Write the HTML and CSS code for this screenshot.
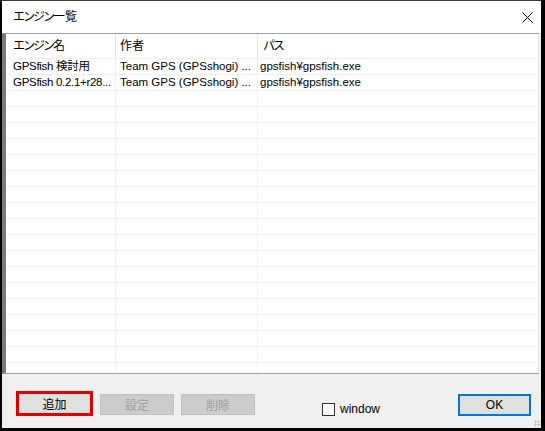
FILE: index.html
```html
<!DOCTYPE html>
<html lang="ja">
  <head>
    <meta charset="UTF-8" />
    <title>エンジン一覧</title>
    <link rel="stylesheet" href="styles.css">
  </head>
  <body>
    <div class="dialog">
      <div class="titlebar">
        <span class="title"><span class="kana">エンジン</span>一覧</span>
        <svg class="close" width="11" height="11" viewBox="0 0 11 11">
          <path d="M0.5 0.5 L10.5 10.5 M10.5 0.5 L0.5 10.5" stroke="#000" stroke-width="1" fill="none" />
        </svg>
      </div>
      <div class="list">
        <div class="row header">
          <div class="cell c1"><span class="kana">エンジン</span>名</div>
          <div class="cell c2">作者</div>
          <div class="cell c3 h3"><span class="kana">パス</span></div>
        </div>
        <div class="row">
          <div class="cell c1">GPSfish 検討用</div>
          <div class="cell c2">Team GPS (GPSshogi) ...</div>
          <div class="cell c3">gpsfish¥gpsfish.exe</div>
        </div>
        <div class="row">
          <div class="cell c1">GPSfish 0.2.1+r28...</div>
          <div class="cell c2">Team GPS (GPSshogi) ...</div>
          <div class="cell c3">gpsfish¥gpsfish.exe</div>
        </div>
        <!-- empty rows -->
        <div class="row"><div class="cell c1"></div><div class="cell c2"></div><div class="cell c3"></div></div>
        <div class="row"><div class="cell c1"></div><div class="cell c2"></div><div class="cell c3"></div></div>
        <div class="row"><div class="cell c1"></div><div class="cell c2"></div><div class="cell c3"></div></div>
        <div class="row"><div class="cell c1"></div><div class="cell c2"></div><div class="cell c3"></div></div>
        <div class="row"><div class="cell c1"></div><div class="cell c2"></div><div class="cell c3"></div></div>
        <div class="row"><div class="cell c1"></div><div class="cell c2"></div><div class="cell c3"></div></div>
        <div class="row"><div class="cell c1"></div><div class="cell c2"></div><div class="cell c3"></div></div>
        <div class="row"><div class="cell c1"></div><div class="cell c2"></div><div class="cell c3"></div></div>
        <div class="row"><div class="cell c1"></div><div class="cell c2"></div><div class="cell c3"></div></div>
        <div class="row"><div class="cell c1"></div><div class="cell c2"></div><div class="cell c3"></div></div>
        <div class="row"><div class="cell c1"></div><div class="cell c2"></div><div class="cell c3"></div></div>
        <div class="row"><div class="cell c1"></div><div class="cell c2"></div><div class="cell c3"></div></div>
        <div class="row"><div class="cell c1"></div><div class="cell c2"></div><div class="cell c3"></div></div>
        <div class="row"><div class="cell c1"></div><div class="cell c2"></div><div class="cell c3"></div></div>
        <div class="row"><div class="cell c1"></div><div class="cell c2"></div><div class="cell c3"></div></div>
        <div class="row"><div class="cell c1"></div><div class="cell c2"></div><div class="cell c3"></div></div>
        <div class="row"><div class="cell c1"></div><div class="cell c2"></div><div class="cell c3"></div></div>
        <div class="row"><div class="cell c1"></div><div class="cell c2"></div><div class="cell c3"></div></div>
      </div>
      <div class="footer">
        <div class="highlight"><button class="btn">追加</button></div>
        <button class="btn disabled">設定</button>
        <button class="btn disabled">削除</button>
        <label class="check"><span class="box"></span>window</label>
        <button class="btn ok">OK</button>
        <span class="grip"></span>
      </div>
    </div>
  </body>
</html>
```

FILE: styles.css
```css
body {
  margin: 0;
  background: #000;
  font-family: "Liberation Sans", "Noto Sans CJK JP", sans-serif;
  font-size: 12px;
  color: #000;
}

.dialog {
  margin-left: 2px;
  width: 539px;
  height: 428px;
  background: #f0f0f0;
  border-top: 1px solid #3a3a3a;
  box-sizing: border-box;
  display: flex;
  flex-direction: column;
  position: relative;
}

.kana {
  letter-spacing: -2px;
}

.titlebar {
  height: 32px;
  background: #fff;
  display: flex;
  align-items: center;
  padding: 0 8px 0 11px;
}

.title {
  flex: 1;
  line-height: 14px;
}

.close {
  display: block;
}

.list {
  height: 341px;
  background: #fff;
  border-top: 1px solid #a0a0a0;
  border-bottom: 1px solid #a0a0a0;
  border-left: 4px solid #7a7a7a;
  margin-right: 2px;
  box-sizing: border-box;
  overflow: hidden;
  font-size: 11.5px;
}

.row {
  display: grid;
  grid-template-columns: 110px 142px 1fr;
  height: 16px;
  border-bottom: 1px solid #f0f0f0;
  box-sizing: border-box;
}

.row.header {
  height: 25px;
}

.cell {
  box-sizing: border-box;
  border-right: 1px solid #f0f0f0;
  padding-left: 7px;
  line-height: 15px;
  white-space: nowrap;
  overflow: hidden;
}

.cell.c1 {
  letter-spacing: -0.3px;
}

.row.header .cell {
  line-height: 25px;
  font-size: 12px;
  letter-spacing: 0;
  border-right-color: #e5e5e5;
}

.cell.c2 {
  padding-left: 4px;
}

.cell.c3 {
  padding-left: 2px;
  border-right-color: #e5e5e5;
}

.row.header .cell.h3 {
  padding-left: 5px;
}

.footer {
  flex: 1;
  display: flex;
  align-items: flex-start;
  padding: 0 10px 0 14px;
  position: relative;
}

.btn {
  font-family: inherit;
  font-size: 12px;
  background: #e1e1e1;
  border: 1px solid #adadad;
  padding: 0;
  width: 74px;
  height: 21px;
  margin-top: 20px;
  color: #000;
}

.highlight {
  margin-top: 17px;
  width: 77px;
  height: 25px;
  border: 3px solid #e00000;
  box-sizing: border-box;
  background: #e1e1e1;
}

.highlight .btn {
  margin: 0;
  width: 71px;
  height: 19px;
  border: none;
}

.btn.disabled {
  background: #cccccc;
  border-color: #bfbfbf;
  color: #a0a0a0;
  margin-left: 7px;
}

.check {
  display: flex;
  align-items: center;
  margin-top: 28px;
  margin-left: 67px;
}

.box {
  width: 11px;
  height: 11px;
  border: 1px solid #333;
  background: #fff;
  margin-right: 5px;
}

.btn.ok {
  margin-left: auto;
  width: 73px;
  height: 22px;
  border: 2px solid #0078d7;
  line-height: 14px;
}

.grip {
  position: absolute;
  right: 0;
  bottom: 1px;
  width: 7px;
  height: 7px;
  background: radial-gradient(circle, #b8b8b8 45%, transparent 50%) 0 0 / 3px 3px;
}
```
